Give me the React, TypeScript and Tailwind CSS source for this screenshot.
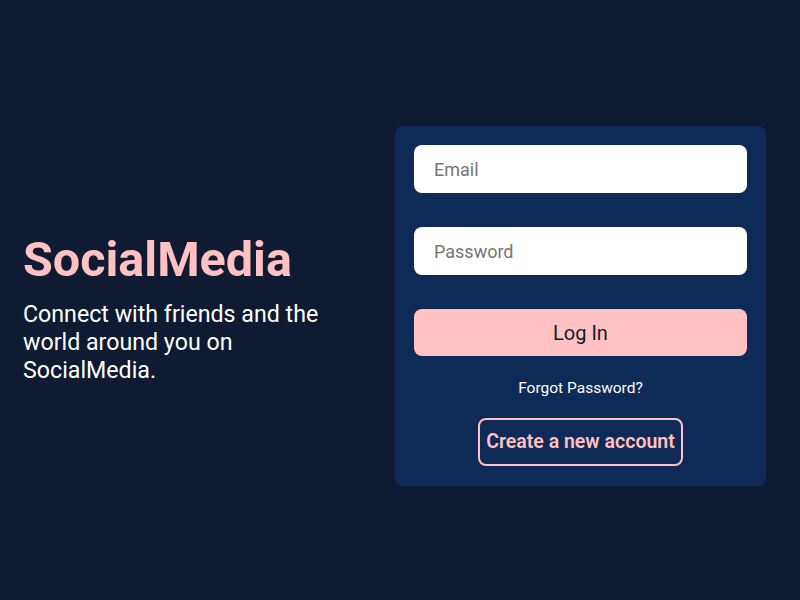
export default function App() {
  return (
    <div
      className="flex min-h-screen w-full items-center bg-[#0f1b32] pt-3 text-white"
      style={{ fontFamily: "Roboto, 'Liberation Sans', sans-serif" }}
    >
      <div className="flex w-full items-center pl-[23px]">
        <div className="mt-[4px] w-[330px]">
          <h1 className="text-[48.5px] font-bold leading-[56px] text-[#ffc1c1]">SocialMedia</h1>
          <p className="mt-[12px] text-[23.2px] leading-[28px] text-white">
            Connect with friends and the world around you on SocialMedia.
          </p>
        </div>
        <div className="ml-[42px] w-[371px] rounded-lg bg-[#0e2a56] px-[19px] pb-[20px] pt-[19px]">
          <input
            type="text"
            placeholder="Email"
            className="block h-[48px] w-full rounded-lg bg-white px-5 text-[18px] text-gray-800 outline-none placeholder:text-[#757575]"
          />
          <input
            type="password"
            placeholder="Password"
            className="mt-[34px] block h-[48px] w-full rounded-lg bg-white px-5 text-[18px] text-gray-800 outline-none placeholder:text-[#757575]"
          />
          <button className="mt-[34px] block h-[47px] w-full rounded-lg bg-[#ffc1c1] text-[20px] text-[#0f1b32]">
            Log In
          </button>
          <div className="mt-[22px] text-center text-[15.5px] leading-[20px] text-white">
            <a href="#" className="hover:underline">Forgot Password?</a>
          </div>
          <div className="mt-[20px] flex justify-center">
            <button className="h-[48px] rounded-lg border-2 border-[#ffc1c1] px-[6px] text-[19.5px] font-semibold text-[#ffc1c1]">
              Create a new account
            </button>
          </div>
        </div>
      </div>
    </div>
  );
}
